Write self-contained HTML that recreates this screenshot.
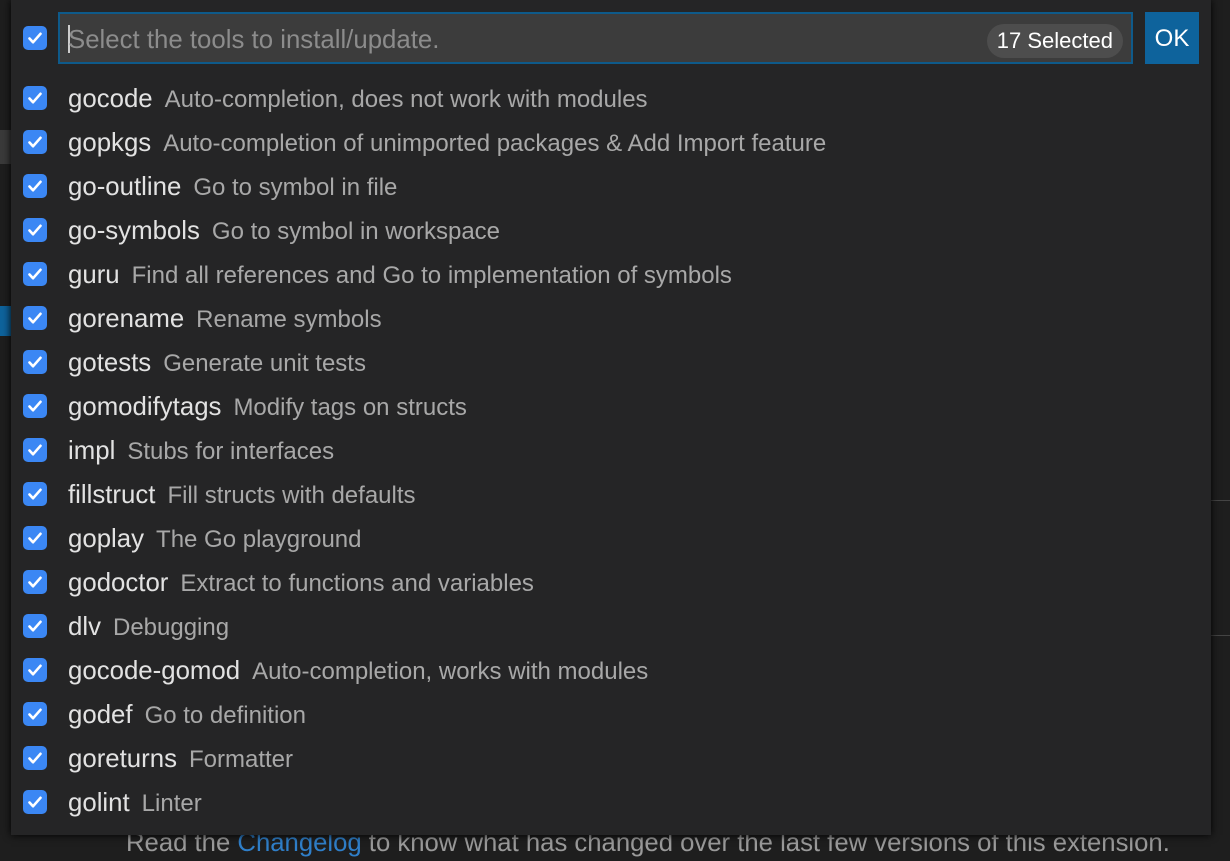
<!DOCTYPE html>
<html><head><meta charset="utf-8"><style>
*{margin:0;padding:0;box-sizing:border-box}
body{width:1230px;height:861px;background:#1e1e1e;overflow:hidden;position:relative;font-family:"Liberation Sans",sans-serif}
.panel{position:absolute;left:11px;top:0;width:1200px;height:835px;background:#252526;box-shadow:0 0 8px #000}
.cb{position:absolute;width:24px;height:24px;border-radius:5px;background:#3b87f4}
.cb svg{position:absolute;left:0;top:0}
.input{position:absolute;left:58px;top:12px;width:1075px;height:52px;background:#3c3c3c;border:2px solid #0e5a8a}
.ph{position:absolute;left:8px;top:12px;font-size:25.8px;color:#8c8c8c;white-space:nowrap}
.caret{position:absolute;left:8px;top:11px;width:2px;height:28px;background:#ccc}
.badge{position:absolute;right:8px;top:10px;height:34px;padding:0 10px;border-radius:17px;background:#4d4d4d;color:#fff;font-size:22px;line-height:34px;white-space:nowrap}
.ok{position:absolute;left:1145px;top:12px;width:54px;height:52px;background:#0e639c;color:#fff;font-size:24px;line-height:54px;text-align:center}
.row{position:absolute;left:0;height:44px;width:1200px}
.row .cb{left:12px;top:9px}
.row .t{position:absolute;left:57px;top:8px;font-size:25.8px;color:#e2e2e2;white-space:nowrap}
.row .t span{font-size:24px;color:#a8a8a8;margin-left:12px}
.bottom{position:absolute;left:126px;top:829px;font-size:25.7px;color:#9a9a9a;white-space:nowrap}
.bottom a{color:#2f7fc9}
</style></head><body>
<div class="bottom">Read the <a>Changelog</a> to know what has changed over the last few versions of this extension.</div>
<div style="position:absolute;left:0;top:130px;width:11px;height:34px;background:#3a3a3a"></div>
<div style="position:absolute;left:0;top:306px;width:11px;height:30px;background:#0e639c"></div>
<div style="position:absolute;left:1211px;top:500px;width:19px;height:1px;background:#444"></div>
<div style="position:absolute;left:1211px;top:635px;width:19px;height:1px;background:#444"></div>
<div class="panel">
<div class="cb" style="left:12px;top:26px"><svg width="24" height="24"><path d="M6.5 12.5l3.5 3.8 7.5-8.5" stroke="#fff" stroke-width="2.6" fill="none" stroke-linecap="round" stroke-linejoin="round"/></svg></div>
</div>
<div class="input"><div class="caret"></div><div class="ph">Select the tools to install/update.</div><div class="badge">17 Selected</div></div>
<div class="ok">OK</div>
<div style="position:absolute;left:11px;top:77px">
<div class="row" style="top:0px"><div class="cb"><svg width="24" height="24"><path d="M6.5 12.5l3.5 3.8 7.5-8.5" stroke="#fff" stroke-width="2.6" fill="none" stroke-linecap="round" stroke-linejoin="round"/></svg></div><div class="t">gocode<span>Auto-completion, does not work with modules</span></div></div>
<div class="row" style="top:44px"><div class="cb"><svg width="24" height="24"><path d="M6.5 12.5l3.5 3.8 7.5-8.5" stroke="#fff" stroke-width="2.6" fill="none" stroke-linecap="round" stroke-linejoin="round"/></svg></div><div class="t">gopkgs<span>Auto-completion of unimported packages &amp; Add Import feature</span></div></div>
<div class="row" style="top:88px"><div class="cb"><svg width="24" height="24"><path d="M6.5 12.5l3.5 3.8 7.5-8.5" stroke="#fff" stroke-width="2.6" fill="none" stroke-linecap="round" stroke-linejoin="round"/></svg></div><div class="t">go-outline<span>Go to symbol in file</span></div></div>
<div class="row" style="top:132px"><div class="cb"><svg width="24" height="24"><path d="M6.5 12.5l3.5 3.8 7.5-8.5" stroke="#fff" stroke-width="2.6" fill="none" stroke-linecap="round" stroke-linejoin="round"/></svg></div><div class="t">go-symbols<span>Go to symbol in workspace</span></div></div>
<div class="row" style="top:176px"><div class="cb"><svg width="24" height="24"><path d="M6.5 12.5l3.5 3.8 7.5-8.5" stroke="#fff" stroke-width="2.6" fill="none" stroke-linecap="round" stroke-linejoin="round"/></svg></div><div class="t">guru<span>Find all references and Go to implementation of symbols</span></div></div>
<div class="row" style="top:220px"><div class="cb"><svg width="24" height="24"><path d="M6.5 12.5l3.5 3.8 7.5-8.5" stroke="#fff" stroke-width="2.6" fill="none" stroke-linecap="round" stroke-linejoin="round"/></svg></div><div class="t">gorename<span>Rename symbols</span></div></div>
<div class="row" style="top:264px"><div class="cb"><svg width="24" height="24"><path d="M6.5 12.5l3.5 3.8 7.5-8.5" stroke="#fff" stroke-width="2.6" fill="none" stroke-linecap="round" stroke-linejoin="round"/></svg></div><div class="t">gotests<span>Generate unit tests</span></div></div>
<div class="row" style="top:308px"><div class="cb"><svg width="24" height="24"><path d="M6.5 12.5l3.5 3.8 7.5-8.5" stroke="#fff" stroke-width="2.6" fill="none" stroke-linecap="round" stroke-linejoin="round"/></svg></div><div class="t">gomodifytags<span>Modify tags on structs</span></div></div>
<div class="row" style="top:352px"><div class="cb"><svg width="24" height="24"><path d="M6.5 12.5l3.5 3.8 7.5-8.5" stroke="#fff" stroke-width="2.6" fill="none" stroke-linecap="round" stroke-linejoin="round"/></svg></div><div class="t">impl<span>Stubs for interfaces</span></div></div>
<div class="row" style="top:396px"><div class="cb"><svg width="24" height="24"><path d="M6.5 12.5l3.5 3.8 7.5-8.5" stroke="#fff" stroke-width="2.6" fill="none" stroke-linecap="round" stroke-linejoin="round"/></svg></div><div class="t">fillstruct<span>Fill structs with defaults</span></div></div>
<div class="row" style="top:440px"><div class="cb"><svg width="24" height="24"><path d="M6.5 12.5l3.5 3.8 7.5-8.5" stroke="#fff" stroke-width="2.6" fill="none" stroke-linecap="round" stroke-linejoin="round"/></svg></div><div class="t">goplay<span>The Go playground</span></div></div>
<div class="row" style="top:484px"><div class="cb"><svg width="24" height="24"><path d="M6.5 12.5l3.5 3.8 7.5-8.5" stroke="#fff" stroke-width="2.6" fill="none" stroke-linecap="round" stroke-linejoin="round"/></svg></div><div class="t">godoctor<span>Extract to functions and variables</span></div></div>
<div class="row" style="top:528px"><div class="cb"><svg width="24" height="24"><path d="M6.5 12.5l3.5 3.8 7.5-8.5" stroke="#fff" stroke-width="2.6" fill="none" stroke-linecap="round" stroke-linejoin="round"/></svg></div><div class="t">dlv<span>Debugging</span></div></div>
<div class="row" style="top:572px"><div class="cb"><svg width="24" height="24"><path d="M6.5 12.5l3.5 3.8 7.5-8.5" stroke="#fff" stroke-width="2.6" fill="none" stroke-linecap="round" stroke-linejoin="round"/></svg></div><div class="t">gocode-gomod<span>Auto-completion, works with modules</span></div></div>
<div class="row" style="top:616px"><div class="cb"><svg width="24" height="24"><path d="M6.5 12.5l3.5 3.8 7.5-8.5" stroke="#fff" stroke-width="2.6" fill="none" stroke-linecap="round" stroke-linejoin="round"/></svg></div><div class="t">godef<span>Go to definition</span></div></div>
<div class="row" style="top:660px"><div class="cb"><svg width="24" height="24"><path d="M6.5 12.5l3.5 3.8 7.5-8.5" stroke="#fff" stroke-width="2.6" fill="none" stroke-linecap="round" stroke-linejoin="round"/></svg></div><div class="t">goreturns<span>Formatter</span></div></div>
<div class="row" style="top:704px"><div class="cb"><svg width="24" height="24"><path d="M6.5 12.5l3.5 3.8 7.5-8.5" stroke="#fff" stroke-width="2.6" fill="none" stroke-linecap="round" stroke-linejoin="round"/></svg></div><div class="t">golint<span>Linter</span></div></div>
</div>
</body></html>
